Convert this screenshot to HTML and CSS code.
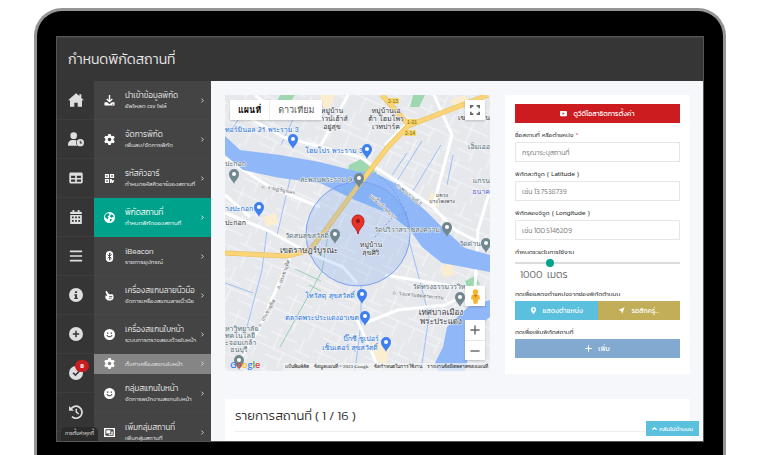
FILE: index.html
```html
<!DOCTYPE html>
<html lang="th">
<head>
<meta charset="utf-8">
<meta name="viewport" content="width=device-width, initial-scale=1">
<title>กำหนดพิกัดสถานที่</title>
<link rel="stylesheet" href="styles.css">
</head>
<body>
<svg class="sprite" aria-hidden="true">
  <symbol id="i-home" viewBox="0 0 24 24"><path d="M12 2 0 12.500h3V22h6.500v-6h5v6H21v-9.500h3L20 9V3.500h-3V6z"/></symbol>
  <symbol id="i-user" viewBox="0 0 24 24"><circle cx="8.500" cy="7" r="5"/><path d="M0 22v-2c0-4 3-6.500 7-6.500h3.500l2.500.6a7 7 0 0 0 1 7.900z"/><path fill-rule="evenodd" d="M18.500 12a5.500 5.500 0 1 0 0 11 5.500 5.500 0 0 0 0-11zm-.8 2.500h1.500v2.600h2v1.500h-3.500z"/></symbol>
  <symbol id="i-table" viewBox="0 0 24 24"><path fill-rule="evenodd" d="M3 2.500h18a2.500 2.500 0 0 1 2.500 2.500v14a2.500 2.500 0 0 1-2.500 2.500H3A2.500 2.500 0 0 1 .5 19V5A2.500 2.500 0 0 1 3 2.500zM3.500 8v3.800h7V8zm10 0v3.800h7V8zm-10 6.500v4h7v-4zm10 0v4h7v-4z"/></symbol>
  <symbol id="i-cal" viewBox="0 0 24 24"><path fill-rule="evenodd" d="M6 0h3v3h6V0h3v3h2.500A1.500 1.500 0 0 1 22 4.500V7H2V4.500A1.500 1.500 0 0 1 3.500 3H6zM2 8.500h20v14a1.500 1.500 0 0 1-1.500 1.500h-17A1.500 1.500 0 0 1 2 22.500zM5 11v3h3v-3zm5.500 0v3h3v-3zm5.500 0v3h3v-3zM5 17v3h3v-3zm5.500 0v3h3v-3zm5.500 0v3h3v-3z"/></symbol>
  <symbol id="i-bars" viewBox="0 0 24 24"><path d="M1.500 2.500h21v3h-21zm0 8h21v3h-21zm0 8h21v3h-21z"/></symbol>
  <symbol id="i-info" viewBox="0 0 24 24"><path fill-rule="evenodd" d="M12 0a12 12 0 1 0 0 24 12 12 0 0 0 0-24zm-1.800 5.500h3.600v3.200h-3.600zM9 10.500h4.800v6H15V19H9v-2.500h1.500V13H9z"/></symbol>
  <symbol id="i-plusc" viewBox="0 0 24 24"><path fill-rule="evenodd" d="M12 0a12 12 0 1 0 0 24 12 12 0 0 0 0-24zm-1.300 6.500h2.600v4.200h4.200v2.600h-4.200v4.200h-2.600v-4.200H6.500v-2.600h4.200z"/></symbol>
  <symbol id="i-check" viewBox="0 0 24 24"><path fill-rule="evenodd" d="M12 0a12 12 0 1 0 0 24 12 12 0 0 0 0-24zM8 10.500l3 3 6-6 2 2-8 8-5-5z"/></symbol>
  <symbol id="i-history" viewBox="0 0 24 24"><path fill="none" stroke="currentColor" stroke-width="3" d="M3 7.500A10.300 10.300 0 1 1 5 20"/><path d="M0 1.500V10h8.500z"/><path fill="none" stroke="currentColor" stroke-width="2.600" d="M12.500 6.500V12l4 3.500"/></symbol>
  <symbol id="i-down" viewBox="0 0 24 24"><path fill="none" stroke="currentColor" stroke-width="3" d="M12 0v14M6 8.500l6 6 6-6"/><path fill-rule="evenodd" d="M1 16h6l5 4 5-4h6v7H1zm17 3v2h2v-2z"/></symbol>
  <symbol id="i-gear" viewBox="0 0 24 24"><path fill-rule="evenodd" d="M9.500 0h5l.8 3.500 2.200 1.300L21 3.700l2.500 4.300-2.600 2.600v2.800l2.600 2.600-2.500 4.300-3.500-1.100-2.200 1.300-.8 3.500h-5l-.8-3.500-2.200-1.300L3 20.300.5 16l2.600-2.600v-2.800L.5 8 3 3.700l3.500 1.100 2.200-1.300zM12 8a4 4 0 1 0 0 8 4 4 0 0 0 0-8z"/></symbol>
  <symbol id="i-qr" viewBox="0 0 24 24"><path fill-rule="evenodd" d="M2 2h9v9H2zm3 3v3h3V5zm8-3h9v9h-9zm3 3v3h3V5zM2 13h9v9H2zm3 3v3h3v-3zm8-3h4v3h5v3h-2v3h-3v-3h-1v3h-3z"/></symbol>
  <symbol id="i-globe" viewBox="0 0 24 24"><circle cx="12" cy="12" r="12"/><path class="globe-land" d="M3 6l4-3.500 5 1-1 4-3 2 2 3-2 4-4-4-2-1zM15 5l5 2 1 5-3-1-2 2-3-3zM13 15l4 0-1 4-3 2z"/></symbol>
  <symbol id="i-bt" viewBox="0 0 24 24"><rect x="4" width="16" height="24" rx="8"/><path class="bt-line" d="M8 8l8 8-4 3.500v-15L16 8l-8 8"/></symbol>
  <symbol id="i-hand" viewBox="0 0 24 24"><path fill-rule="evenodd" d="M3 3l3-1 5 7h8l2 4-1 7-5 3H8l-5-5v-6l4 1zm8 10v1.500h7V13zm0 4v1.500h6V17z"/></symbol>
  <symbol id="i-smile" viewBox="0 0 24 24"><path fill-rule="evenodd" d="M12 0a12 12 0 1 0 0 24 12 12 0 0 0 0-24zM6.500 7.500h3v3h-3zm8 0h3v3h-3zM5.500 13h2c1.500 4 7.500 4 9 0h2c-1.500 7-11.500 7-13 0z"/></symbol>
  <symbol id="i-group" viewBox="0 0 24 24"><path fill-rule="evenodd" d="M0 2h24v20H0zm3 4v12l2 1h14l2-1V6l-2-1H5zm2 1h9v7H5zm11 3h3v7h-9v-1.500h6z"/></symbol>
  <symbol id="i-chev" viewBox="0 0 24 24"><path fill="none" stroke="currentColor" stroke-width="4" d="M7 3l9 9-9 9"/></symbol>
  <symbol id="i-up" viewBox="0 0 24 24"><path fill="none" stroke="currentColor" stroke-width="6" d="M2 18l10-9 10 9"/></symbol>
  <symbol id="i-video" viewBox="0 0 24 24"><path fill-rule="evenodd" d="M3 3h18a3 3 0 0 1 3 3v12a3 3 0 0 1-3 3H3a3 3 0 0 1-3-3V6a3 3 0 0 1 3-3zm6 5v8l7-4z"/></symbol>
  <symbol id="i-pin" viewBox="0 0 24 24"><path fill-rule="evenodd" d="M12 0a9 9 0 0 0-9 9c0 5 5 9 9 15 4-6 9-10 9-15a9 9 0 0 0-9-9zm0 5.500a3.500 3.500 0 1 1 0 7 3.500 3.500 0 0 1 0-7z"/></symbol>
  <symbol id="i-arrow" viewBox="0 0 24 24"><path d="M23 1 14 23l-3-10L1 10z"/></symbol>
  <symbol id="i-plus" viewBox="0 0 24 24"><path d="M10.300 1h3.400v9.300H23v3.400h-9.300V23h-3.400v-9.300H1v-3.400h9.300z"/></symbol>
</svg>

<div class="device">
  <div class="screen">
    <header class="topbar"><h1>กำหนดพิกัดสถานที่</h1></header>
    <div class="body">
      <nav class="rail" aria-label="เมนูหลัก">
        <a href="#"><svg class="wide"><use href="#i-home"/></svg></a>
        <a href="#"><svg class="wide"><use href="#i-user"/></svg></a>
        <a href="#"><svg><use href="#i-table"/></svg></a>
        <a href="#"><svg><use href="#i-cal"/></svg></a>
        <a href="#"><svg><use href="#i-bars"/></svg></a>
        <a href="#"><svg><use href="#i-info"/></svg></a>
        <a href="#"><svg><use href="#i-plusc"/></svg></a>
        <a href="#"><svg><use href="#i-check"/></svg><span class="badge">8</span></a>
        <a href="#"><svg><use href="#i-history"/></svg></a>
      </nav>
      <nav class="menu" aria-label="เมนูย่อย">
        <a href="#"><svg class="ico"><use href="#i-down"/></svg><span class="txt"><b>นำเข้าข้อมูลพิกัด</b><small>อัพโหลด csv ไฟล์</small></span><svg class="chev"><use href="#i-chev"/></svg></a>
        <a href="#"><svg class="ico"><use href="#i-gear"/></svg><span class="txt"><b>จัดการพิกัด</b><small>เพิ่มลบ/จัดการพิกัด</small></span><svg class="chev"><use href="#i-chev"/></svg></a>
        <a href="#"><svg class="ico"><use href="#i-qr"/></svg><span class="txt"><b>รหัสคิวอาร์</b><small>กำหนดรหัสคิวอาร์ของสถานที่</small></span><svg class="chev"><use href="#i-chev"/></svg></a>
        <a href="#" class="active" aria-current="page"><svg class="ico"><use href="#i-globe"/></svg><span class="txt"><b>พิกัดสถานที่</b><small>กำหนดพิกัดของสถานที่</small></span><svg class="chev"><use href="#i-chev"/></svg></a>
        <a href="#"><svg class="ico"><use href="#i-bt"/></svg><span class="txt"><b>iBeacon</b><small>รายการอุปกรณ์</small></span><svg class="chev"><use href="#i-chev"/></svg></a>
        <a href="#"><svg class="ico"><use href="#i-hand"/></svg><span class="txt"><b>เครื่องสแกนลายนิ้วมือ</b><small>จัดการเครื่องสแกนลายนิ้วมือ</small></span><svg class="chev"><use href="#i-chev"/></svg></a>
        <a href="#"><svg class="ico"><use href="#i-smile"/></svg><span class="txt"><b>เครื่องสแกนใบหน้า</b><small>ระบบการตรวจสอบด้วยใบหน้า</small></span><svg class="chev"><use href="#i-chev"/></svg></a>
        <a href="#" class="sub"><svg class="ico"><use href="#i-gear"/></svg><span class="txt"><small>ตั้งค่าเครื่องสแกนใบหน้า</small></span><svg class="chev"><use href="#i-chev"/></svg></a>
        <a href="#"><svg class="ico"><use href="#i-smile"/></svg><span class="txt"><b>กลุ่มสแกนใบหน้า</b><small>จัดการพนักงานสแกนใบหน้า</small></span><svg class="chev"><use href="#i-chev"/></svg></a>
        <a href="#"><svg class="ico"><use href="#i-group"/></svg><span class="txt"><b>เพิ่มกลุ่มสถานที่</b><small>เพิ่มกลุ่มสถานที่</small></span><svg class="chev"><use href="#i-chev"/></svg></a>
      </nav>
      <main class="content">
        <section class="map" aria-label="แผนที่">
          <svg class="map-art" viewBox="0 0 265 276" preserveAspectRatio="xMidYMid slice">
            <defs>
              <pattern id="streets" width="46" height="38" patternUnits="userSpaceOnUse" patternTransform="rotate(24)">
                <path class="street" d="M0 7h28M9 0v22M0 22h46M20 22v16M34 0v15M28 15h18M4 30h16M38 22v16"/>
              </pattern>
              <g id="poi"><path d="M0 9C-1 5-5 4-5-1a5 5 0 0 1 10 0C5 4 1 5 0 9z"/><circle class="poi-dot" cy="-1" r="2"/></g>
            </defs>
            <rect class="land" width="265" height="276"/>
            <rect width="265" height="276" fill="url(#streets)"/>
            <path class="park" d="M55 0h15l-8 12-12-2zM188 0h12l-6 12h-9zM124 70l12-6 16 14-8 6-22-3zM240 186l10-5 5 8-12 6z"/>
            <path class="built" d="M96 0h14l-6 14-10-4zM38 122l12-4 4 10-12 4zM206 98l10 3-4 12-11-4zM216 172l10-4 4 12-12 2zM147 246l18 6-4 18-14-6zM225 6l14-6 8 8-14 8z"/>
            <path class="canal" d="M18 18 4 38M70 20 56 50M66 80 52 140M42 135 37 175 22 232M0 188l28 10M182 58l-15 22M197 46l-30 48M216 50l-28 46M184 145l10 38 10 38-8 55M136 190v38l-6 48M228 60l-6 30"/>
            <path class="green-line" d="M103 140l-6 36-42 76M70 174l26 12M84 190l12 6"/>
            <path class="road" d="M15 18 58 42l77 20 38 25 35 25 22 23 35 18M0 63l45 29 50 20M0 100l25 22M0 118l42 17 40 22 36 15 14 16M65 162 35 232 15 265M123 0 95 52M160 50 182 28M130 220l17 38 8 18M140 228l33-13 47-5 30-15 3-60 12-40M209 0l18 40-10 38-9 34M160 180l90 15M30 0l25 20"/>
            <path class="water" d="M0 41 15 55l40 5 40 7 35 9 20 2 23 12 30 28 17 17 20 18 25 7v17l-48-9-20-16-12-17-22-17-33-13-35-17-40-5-37-8L0 60zM265 205l-22 7-21 20-4 20-8 16 3 8h27l5-24 8-20 12-10z"/>
            <path class="highway-edge" d="M157 0l25 28M263 0l-80 31-20 21-33 43-28 38-17 22-23 6-62-3"/>
            <path class="highway" d="M157 0l25 28M263 0l-80 31-20 21-33 43-28 38-17 22-23 6-62-3"/>
            <circle class="radius" cx="133" cy="139" r="52"/>
            <path class="river-link" d="M150 78q28 18 34 57M150 142l18-20 16-5"/>
            <g class="shield"><rect x="162" y="3" width="12" height="6"/><rect x="181" y="24" width="12" height="6"/><rect x="179" y="35" width="12" height="6"/></g>
            <g class="shield-text"><text x="168" y="8">2-13</text><text x="187" y="29">1-01</text><text x="185" y="40">2-14</text></g>
            <g class="place">
              <text x="107" y="18">หมู่บ้าน</text><text x="109" y="26">าวน์เฮ้าส์</text><text x="107" y="34">อยู่สุข</text>
              <text x="161" y="18">หมู่บ้านเอ</text><text x="161" y="26">ต้า โฮมโพร</text><text x="161" y="34">เวทปาร์ค</text>
              <text class="start" x="233" y="25">เข</text><text class="end" x="265" y="25">าน</text><text class="start" x="0" y="130">ปะกอก</text>
              <text x="146" y="152">หมู่บ้าน</text><text x="146" y="160">สุขศิริ</text>
              <text class="big" x="84" y="158">เขตราษฎร์บูรณะ</text>
              <text class="big" x="216" y="220">เทศบาลเมือง</text><text class="big" x="216" y="229">พระประแดง</text>
              <text class="tiny" x="217" y="102">แขวง</text><text class="tiny" x="217" y="108">บางโพงพาง</text>
            </g>
            <g class="blue-text">
              <text class="start" x="0" y="37">ทอร์มินอล 21 พระราม 3</text><text x="109" y="58">โฮมโปร พระราม 3</text>
              <text class="start" x="0" y="116">างปะกอก</text><text x="105" y="203">โทวัสดุ สุขสวัสดิ์</text>
              <text x="97" y="225">ตลาดพระประแดงอาเขต</text><text x="136" y="246">บิ๊กซี ซูเปอร์</text><text x="125" y="255">เซ็นเตอร์ สุขสวัสดิ์</text>
            </g>
            <g class="gray-text">
              <text class="start" x="0" y="71">ปะกอก</text><text x="101" y="87">สะพานพระราม 9</text><text x="182" y="137">วัดปริวาสราชสงคราม</text>
              <text x="82" y="143">วัดสนสุขสวัสดิ์</text><text x="245" y="151">วัดด่าน</text><text x="214" y="194">วัดทรงธรรมวรวิห</text>
              <text class="end" x="265" y="54">เอ็มเออ</text><text class="end" x="265" y="88">แกรน</text><text class="end violet" x="265" y="99">ธนาค</text>
              <text class="start" x="0" y="236">หาวิทยาลัย</text><text class="start" x="0" y="243">ทคโนโลยี</text><text class="start" x="0" y="250">ะจอมเกล้า</text><text x="14" y="257">ธนบุรี</text>
            </g>
            <g class="street-text">
              <text transform="translate(53 96) rotate(10)">ถ. ราษฎร์บูรณะ</text><text transform="translate(183 101) rotate(40)">ถ. พระรามที่ 3</text>
              <text transform="translate(157 113) rotate(42)">แม่น้ำเจ้าพระยา</text><text transform="translate(60 180) rotate(-70)">ถ. ประชาอุทิศ</text>
              <text transform="translate(43 219) rotate(-60)">ถ. ประชาอุทิศ</text><text transform="translate(193 202) rotate(6)">ถ. วงแหวนอุตสาหกรรม</text>
            </g>
            <g class="poi-blue"><use href="#poi" x="68" y="45"/><use href="#poi" x="142" y="55"/><use href="#poi" x="34" y="113"/><use href="#poi" x="137" y="200"/><use href="#poi" x="140" y="222"/><use href="#poi" x="161" y="248"/></g>
            <g class="poi-gray"><use href="#poi" x="9" y="80"/><use href="#poi" x="134" y="84"/><use href="#poi" x="110" y="140"/><use href="#poi" x="222" y="133"/><use href="#poi" x="261" y="149"/><use href="#poi" x="235" y="203"/><use href="#poi" x="14" y="266"/></g>
            <path class="marker" d="M133 139c-1-6-6-7-6-13a6 6 0 0 1 12 0c0 6-5 7-6 13z"/><circle class="marker-dot" cx="133" cy="126" r="2"/>
          </svg>
          <div class="map-types"><button type="button" class="on">แผนที่</button><button type="button">ดาวเทียม</button></div>
          <button type="button" class="map-btn full" aria-label="เต็มจอ"><svg viewBox="0 0 12 12"><path class="stroke" d="M1 4V1h3M8 1h3v3M11 8v3H8M4 11H1V8"/></svg></button>
          <button type="button" class="map-btn man" aria-label="สตรีทวิว"><svg viewBox="0 0 12 16"><circle class="man-fill" cx="6" cy="3" r="3"/><path class="man-fill" d="M2 6h8l1 5H9l-1 5H4l-1-5H1z"/><path class="man-dark" d="M4 6h4l-2 3z"/></svg></button>
          <div class="zoom"><button type="button" aria-label="ซูมเข้า"><svg><use href="#i-plus"/></svg></button><button type="button" aria-label="ซูมออก"><svg viewBox="0 0 24 24"><path d="M1 10.300h22v3.400H1z"/></svg></button></div>
          <div class="map-foot"><span class="google"><i class="g-blue">G</i><i class="g-red">o</i><i class="g-yellow">o</i><i class="g-blue">g</i><i class="g-green">l</i><i class="g-red">e</i></span><span class="legal"><span>แป้นพิมพ์ลัด</span><span>ข้อมูลแผนที่ ©2023 Google</span><span>ข้อกำหนดในการใช้งาน</span><span>รายงานข้อผิดพลาดของแผนที่</span></span></div>
        </section>

        <form class="card form">
          <button type="button" class="btn red"><svg><use href="#i-video"/></svg>ดูวีดีโอสาธิตการตั้งค่า</button>
          <div class="field"><label for="name">ชื่อสถานที่ หรือตำแหน่ง <em>*</em></label><input id="name" type="text" placeholder="กรุณาระบุสถานที่"></div>
          <div class="field"><label for="lat">พิกัดละติจูด ( Latitude )</label><input id="lat" type="text" placeholder="เช่น 13.7538739"></div>
          <div class="field"><label for="lng">พิกัดลองจิจูด ( Longitude )</label><input id="lng" type="text" placeholder="เช่น 100.5146209"></div>
          <div class="field"><label for="radius">กำหนดระยะในการใช้งาน</label><input id="radius" type="range" min="0" max="5000" step="50" value="1000"><output for="radius">1000 &nbsp;เมตร</output></div>
          <div class="field"><span class="label">กดเพื่อแสดงตำแหน่งจากช่องพิกัดด้านบน</span><div class="pair"><button type="button" class="btn cyan"><svg><use href="#i-pin"/></svg>แสดงตำแหน่ง</button><button type="button" class="btn gold"><svg><use href="#i-arrow"/></svg>รอสักครู่...</button></div></div>
          <div class="field"><span class="label">กดเพื่อเพิ่มพิกัดสถานที่</span><button type="button" class="btn blue"><svg><use href="#i-plus"/></svg>เพิ่ม</button></div>
        </form>

        <section class="card list"><h2>รายการสถานที่ ( 1 / 16 )</h2></section>
      </main>
    </div>
    <div class="cookie">การตั้งค่าคุกกี้</div>
    <a href="#" class="totop"><svg><use href="#i-up"/></svg>กลับไปด้านบน</a>
  </div>
</div>
</body>
</html>
```
FILE: styles.css
```css
* { box-sizing: border-box; }
body { margin: 0; background: #fff; font-family: Kanit, Prompt, sans-serif; font-weight: 300; font-size: 7px; color: #333; overflow: hidden; }
svg { fill: currentColor; display: block; flex: none; }
button, input { font: inherit; margin: 0; border-radius: 0; }
button { border: 0; padding: 0; cursor: pointer; }
a { color: inherit; text-decoration: none; }
.sprite { position: absolute; width: 0; height: 0; }

.device { display: flex; margin: 8px 34px 0; height: calc(100vh - 8px); padding: 26px 20px 14px; background: #000; border: 3px solid #959595; border-bottom: 0; border-radius: 28px 28px 0 0; }
.screen { position: relative; flex: 1; min-width: 0; display: flex; flex-direction: column; overflow: hidden; background: #f6f7fa; box-shadow: 0 0 0 1px #555; }

.topbar { flex: none; height: 44px; padding: 0 11px; display: flex; align-items: center; background: #363636; color: #e6e6e6; border-top: 1px solid #444; }
h1 { margin: 0; font-size: 14px; line-height: 24px; font-weight: 300; }
.body { flex: 1; min-height: 0; display: flex; }

.rail { flex: none; width: 37px; background: #353535; color: #dedede; }
.rail a { position: relative; display: flex; align-items: center; justify-content: center; height: 39px; border-bottom: 1px solid #3d3d3d; }
.rail svg { width: 14px; height: 14px; }
.rail .wide { width: 16px; height: 16px; }
.badge { position: absolute; left: 18px; top: 6px; width: 14px; height: 12px; border-radius: 6px; background: #cb1c20; color: #fff; font-size: 6px; line-height: 12px; font-weight: 600; text-align: center; }

.menu { flex: none; width: 117px; background: #444; color: #e8e8e8; }
.menu a { display: flex; align-items: center; gap: 10px; height: 39px; padding: 0 6px 0 10px; border-bottom: 1px solid #484848; white-space: nowrap; }
.menu .active { background: #00a28c; color: #fff; border-color: #00a28c; }
.menu .sub { height: 20px; background: #858585; border-color: #858585; }
.ico { width: 11px; height: 11px; color: #fff; }
.globe-land { fill: #00a28c; }
.bt-line { fill: none; stroke: #444; stroke-width: 2; }
.txt { flex: 1; min-width: 0; display: flex; flex-direction: column; }
.txt b { font-weight: 300; font-size: 8px; line-height: 11px; }
.txt small { font-size: 6px; line-height: 9px; }
.chev { width: 5px; height: 5px; }

.content { flex: 1; min-width: 0; display: grid; grid-template-columns: minmax(0, 1fr) 185px; grid-template-rows: auto auto; align-content: start; gap: 25px 15px; padding: 14px 13px 0 14px; }
.card { background: #fff; }
.form { padding: 9px 10px 16px; }
.btn { display: flex; align-items: center; justify-content: center; gap: 6px; width: 100%; height: 19px; color: #fff; font-size: 7px; font-weight: 400; }
.btn svg { width: 7px; height: 7px; }
.red { background: #cc1c20; }
.cyan { background: #5bc0de; }
.gold { background: #c2ad59; }
.blue { background: #82a9d0; }
.pair { display: flex; }
.field { margin-top: 6px; }
.field label, .label { display: block; font-family: Prompt, Kanit, sans-serif; font-weight: 400; font-size: 6px; line-height: 13px; white-space: nowrap; }
.field em { color: #e33; font-style: normal; }
.field input[type="text"] { display: block; width: 100%; height: 20px; padding: 0 6px; border: 1px solid #e6e6e6; background: #fff; font-size: 7px; color: #777; }
.field input::placeholder { color: #777; opacity: 1; }
input[type="range"] { display: block; appearance: none; width: 100%; height: 8px; background: linear-gradient(#dcdcdc, #dcdcdc) center / 100% 2px no-repeat; }
input[type="range"]::-webkit-slider-thumb { appearance: none; width: 8px; height: 8px; border-radius: 50%; background: #00a28c; }
output { display: block; padding: 0 5px; font-size: 10px; line-height: 15px; color: #666; }

.list { grid-column: 1 / -1; padding: 5px 10px; min-height: 70px; }
h2 { margin: 0; padding-bottom: 4px; border-bottom: 1px solid #eee; font-size: 13px; line-height: 23px; font-weight: 300; }

.map { position: relative; overflow: hidden; min-width: 0; margin-bottom: 3px; background: #e8eaed; }
.map-art { position: absolute; inset: 0; width: 100%; height: 100%; }
.land { fill: #e6e8ec; }
.street { fill: none; stroke: #f6f7f9; stroke-width: 1; }
.park { fill: #9fd8b0; }
.built { fill: #fbeed0; }
.canal { fill: none; stroke: #9dc0f7; stroke-width: 1; }
.green-line { fill: none; stroke: #9bd0b5; stroke-width: 1; }
.road { fill: none; stroke: #fff; stroke-width: 3; stroke-linejoin: round; }
.water { fill: #90b8f8; }
.highway-edge { fill: none; stroke: #e5bd58; stroke-width: 5; }
.highway { fill: none; stroke: #fbd477; stroke-width: 4; }
.radius { fill: #5c95f2; fill-opacity: .2; stroke: #7e9ff0; stroke-width: 1; }
.river-link { fill: none; stroke: #6f9de8; stroke-dasharray: 2 2; }
.map-art text { text-anchor: middle; font-family: Loma, "Liberation Sans", sans-serif; font-weight: 400; font-size: 7px; paint-order: stroke; stroke: #f3f4f6; stroke-width: 1px; }
.map-art .start { text-anchor: start; }
.map-art .end { text-anchor: end; }
.map-art .place text { fill: #33373d; }
.map-art .place .big { font-size: 8px; }
.map-art .place .tiny { font-size: 5px; }
.map-art .blue-text text { fill: #2272dc; }
.map-art .gray-text text { fill: #536d78; }
.map-art .gray-text .violet { fill: #5b62d8; }
.map-art .street-text text { fill: #666; font-size: 5px; }
.map-art .shield-text text { fill: #765f18; font-size: 5px; stroke: none; font-family: "Liberation Sans", sans-serif; }
.shield { fill: #f6d66b; }
.poi-blue { fill: #3f7fee; }
.poi-gray { fill: #71878f; }
.poi-dot { fill: #fff; }
.marker { fill: #ea3229; stroke: #b3211b; stroke-width: 1; }
.marker-dot { fill: #861a14; }

.map-types { position: absolute; left: 5px; top: 5px; display: flex; background: #fff; box-shadow: 0 1px 2px #0003; }
.map-types button { height: 20px; padding: 0 8px; background: #fff; color: #555; font-family: Loma, "Liberation Serif", serif; font-weight: 400; font-size: 9px; }
.map-types .on { color: #000; font-weight: 700; border-right: 1px solid #eee; }
.map-btn { position: absolute; right: 5px; width: 20px; height: 20px; display: flex; align-items: center; justify-content: center; background: #fff; color: #666; box-shadow: 0 1px 2px #0003; }
.full { top: 5px; }
.full svg { width: 10px; height: 10px; }
.man { bottom: 65px; }
.man svg { width: 11px; height: 15px; }
.stroke { fill: none; stroke: #666; stroke-width: 2; }
.man-fill { fill: #f6b32d; }
.man-dark { fill: #b8740c; }
.zoom { position: absolute; right: 5px; bottom: 11px; width: 20px; background: #fff; color: #666; box-shadow: 0 1px 2px #0003; }
.zoom button { display: flex; align-items: center; justify-content: center; width: 20px; height: 20px; background: none; color: #666; }
.zoom button + button { border-top: 1px solid #e6e6e6; }
.zoom svg { width: 10px; height: 10px; }
.map-foot { position: absolute; left: 5px; right: 0; bottom: 0; display: flex; align-items: flex-end; justify-content: space-between; white-space: nowrap; }
.google { font-family: "Open Sans", sans-serif; font-size: 9px; line-height: 13px; font-weight: 600; }
.google i { font-style: normal; }
.g-blue { color: #4285f4; }
.g-red { color: #ea4335; }
.g-yellow { color: #fbbc05; }
.g-green { color: #34a853; }
.legal { display: flex; gap: 5px; padding: 0 2px; background: #f5f5f5b0; color: #222; font-family: "Liberation Serif", serif; font-weight: 400; font-size: 5px; line-height: 8px; }

.cookie { position: absolute; left: 4px; bottom: 0; padding: 0 4px; border-radius: 5px 5px 0 0; background: #2b2b2b; color: #fff; font-family: Prompt, Kanit, sans-serif; font-size: 5px; line-height: 14px; }
.totop { position: absolute; right: 4px; bottom: 5px; display: flex; align-items: center; gap: 2px; height: 15px; padding: 0 6px; background: #5bc0de; color: #fff; font-size: 6px; font-weight: 400; }
.totop svg { width: 5px; height: 5px; }
```
